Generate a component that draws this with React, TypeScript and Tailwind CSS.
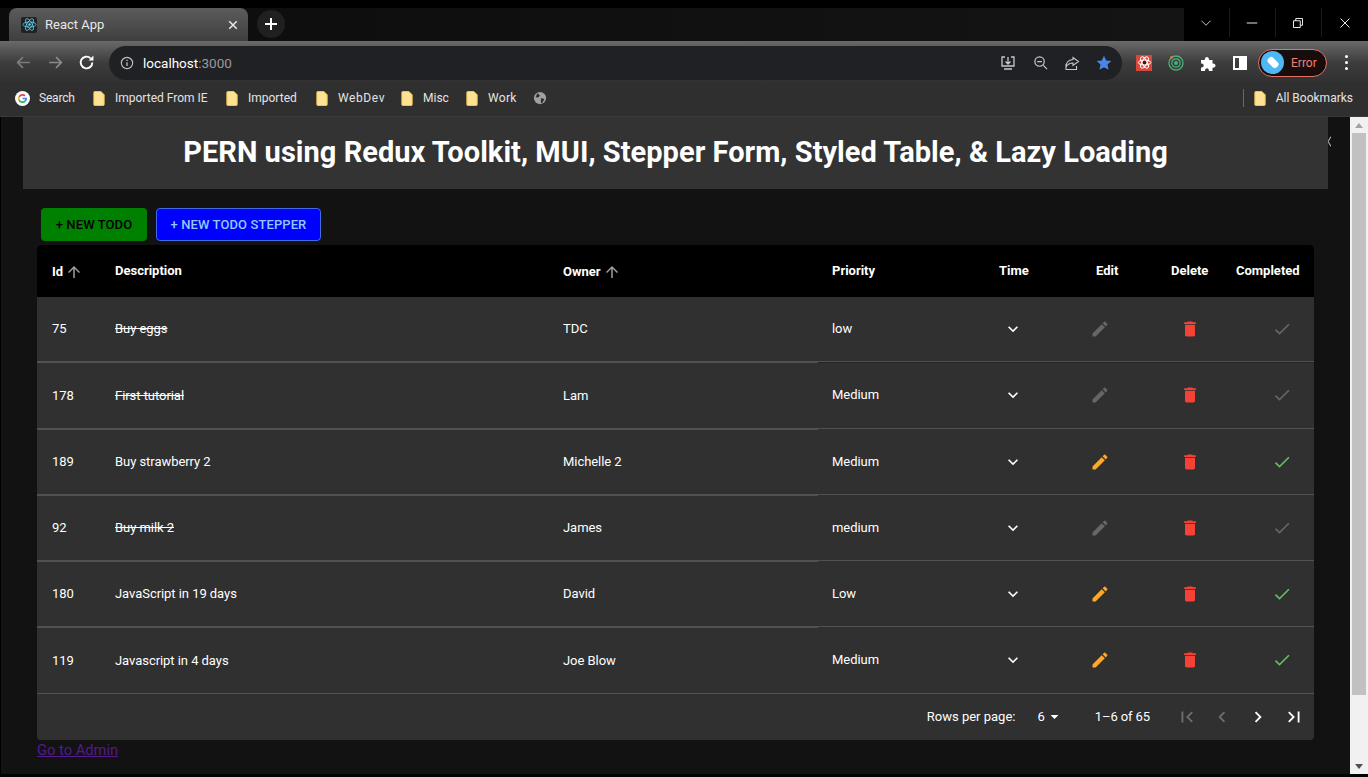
import type { ReactNode } from "react";

const mui = {
  edit: "M3 17.25V21h3.75L17.81 9.94l-3.75-3.75L3 17.25zM20.71 7.04c.39-.39.39-1.02 0-1.41l-2.34-2.34a.9959.9959 0 0 0-1.41 0l-1.83 1.83 3.75 3.75 1.83-1.83z",
  trash: "M6 19c0 1.1.9 2 2 2h8c1.1 0 2-.9 2-2V7H6v12zM19 4h-3.5l-1-1h-5l-1 1H5v2h14V4z",
  check: "M9 16.17 4.83 12l-1.42 1.41L9 19 21 7l-1.41-1.41z",
  down: "M7.41 8.59 12 13.17l4.59-4.58L18 10l-6 6-6-6 1.41-1.41z",
  up: "M4 12l1.41 1.41L11 7.83V20h2V7.83l5.58 5.59L20 12l-8-8-8 8z",
  first: "M18.41 16.59 13.82 12l4.59-4.59L17 6l-6 6 6 6zM6 6h2v12H6z",
  last: "M5.59 7.41 10.18 12l-4.59 4.59L7 18l6-6-6-6zM16 6h2v12h-2z",
  left: "M15.41 16.59 10.83 12l4.58-4.59L14 6l-6 6 6 6 1.41-1.41z",
  right: "M8.59 16.59 13.17 12 8.59 7.41 10 6l6 6-6 6-1.41-1.41z",
  drop: "M7 10l5 5 5-5z",
};

function Mui({ d, className }: { d: string; className: string }) {
  return (
    <svg viewBox="0 0 24 24" fill="currentColor" className={className}>
      <path d={d} />
    </svg>
  );
}

function Stroke({ children, className }: { children: ReactNode; className: string }) {
  return (
    <svg viewBox="0 0 16 16" fill="none" stroke="currentColor" strokeWidth="1.3" className={className}>
      {children}
    </svg>
  );
}

function Folder() {
  return (
    <svg viewBox="0 0 12 16" className="w-[12px] h-[15px] shrink-0">
      <path d="M0.5 1.5a1 1 0 0 1 1-1h6.5l3.5 3.5v10.5a1 1 0 0 1-1 1h-9a1 1 0 0 1-1-1z" fill="#fde293" stroke="#f9c84a" />
    </svg>
  );
}

function ReactLogo() {
  return (
    <div className="w-[16px] h-[16px] rounded-[2px] bg-[#222] flex items-center justify-center">
      <svg viewBox="-12 -11 24 22" className="w-[15px] h-[15px]" fill="none" stroke="#61dafb" strokeWidth="1.2">
        <circle r="2" fill="#61dafb" stroke="none" />
        <ellipse rx="10.5" ry="4.2" />
        <ellipse rx="10.5" ry="4.2" transform="rotate(60)" />
        <ellipse rx="10.5" ry="4.2" transform="rotate(120)" />
      </svg>
    </div>
  );
}

function TabBar() {
  return (
    <div className="h-[41px] pt-[8px] bg-black flex">
      <div className="flex-1 flex items-start bg-gradient-to-r from-[#0c0c0c] to-[#141414] pl-[9px]">
        <div className="w-[239px] h-[33px] rounded-t-[8px] bg-gradient-to-b from-[#5c5c5c] to-[#3f3f3f] flex items-center pl-[12px] pr-[9px]">
          <ReactLogo />
          <span className="ml-[8px] text-[13px] text-[#e8e8e8] flex-1">React App</span>
          <Stroke className="w-[12px] h-[12px] text-[#e8e8e8]">
            <path d="M3 3 13 13M13 3 3 13" strokeWidth="2" />
          </Stroke>
        </div>
        <div className="ml-[9px] mt-[2px] w-[28px] h-[28px] rounded-full bg-[#202020] flex items-center justify-center">
          <Stroke className="w-[16px] h-[16px] text-white">
            <path d="M8 2v12M2 8h12" strokeWidth="2" />
          </Stroke>
        </div>
      </div>
      <div className="w-[184px] h-[29px] bg-black flex text-white">
        {["down", "min", "max", "close"].map((k) => (
          <div key={k} className="w-[46px] pr-[1px] flex items-center justify-center border-r border-[#1c1c1c] last:border-r-0">
            <Stroke className="w-[12px] h-[12px]">
              {k === "down" && <path d="M2 5l6 6 6-6" strokeWidth="1" />}
              {k === "min" && <path d="M1 8h14" strokeWidth="1.2" />}
              {k === "max" && <path d="M2 5h9v9H2zM5 5V2h9v9h-3" strokeWidth="1.2" />}
              {k === "close" && <path d="M2 2l12 12M14 2 2 14" strokeWidth="1.2" />}
            </Stroke>
          </div>
        ))}
      </div>
    </div>
  );
}

function Toolbar() {
  return (
    <div className="h-[43px] bg-gradient-to-b from-[#6a6a6a] via-[#3d3d3d] to-[#2f2f2f] flex items-center pl-[15px]">
      <Stroke className="w-[17px] h-[17px] text-[#7d7d7d]">
        <path d="M14 8H2.5M7.5 3l-5 5 5 5" strokeWidth="1.6" />
      </Stroke>
      <Stroke className="w-[17px] h-[17px] ml-[15px] text-[#8a8a8a]">
        <path d="M2 8h11.5M8.5 3l5 5-5 5" strokeWidth="1.6" />
      </Stroke>
      <Stroke className="w-[17px] h-[17px] ml-[14px] text-white">
        <path d="M13.5 8a5.5 5.5 0 1 1-1.6-3.9" strokeWidth="1.8" />
        <path d="M14.5 1.5v4.5H10z" fill="currentColor" stroke="none" />
      </Stroke>
      <div className="ml-[14px] w-[1013px] h-[34px] rounded-full bg-[#202124] flex items-center pl-[11px] pr-[10px]">
        <Stroke className="w-[14px] h-[14px] text-[#bdbdbd]">
          <circle cx="8" cy="8" r="6.5" />
          <path d="M8 7v4.5M8 4.2v1.6" strokeWidth="1.5" />
        </Stroke>
        <span className="ml-[9px] pt-[1px] text-[13.5px] text-white flex-1">
          localhost<span className="text-[#9a9a9a]">:3000</span>
        </span>
        <Stroke className="w-[16px] h-[16px] -ml-[1px] text-[#c8c8c8]">
          <path d="M5 2H2v9h12V2h-3M8 2v7M5.5 6.5 8 9l2.5-2.5M4 14h8" />
        </Stroke>
        <Stroke className="w-[15px] h-[15px] ml-[17px] text-[#c8c8c8]">
          <circle cx="7" cy="7" r="5" />
          <path d="M4.5 7h5M11 11l4 4" />
        </Stroke>
        <Stroke className="w-[16px] h-[16px] ml-[16px] text-[#c8c8c8]">
          <path d="M9 2.5 14.5 6.5 9 10.5V8C5.5 8 3.5 9.5 2 12c0-4 2.5-7 7-7.5zM2 9v5.5h10.5V11" strokeWidth="1.1" />
        </Stroke>
        <svg viewBox="0 0 16 16" className="w-[16px] h-[16px] ml-[16px]">
          <path d="M8 .8l2.2 4.7 5.1.6-3.8 3.5 1 5.1L8 12.2l-4.5 2.5 1-5.1L.7 6.1l5.1-.6z" fill="#4a86e8" />
        </svg>
      </div>
      <div className="ml-[14px] w-[16px] h-[16px] bg-[#d9473a] flex items-center justify-center">
        <svg viewBox="-12 -11 24 22" className="w-[15px] h-[15px]" fill="none" stroke="#fff" strokeWidth="1.6">
          <circle r="3" fill="#222" stroke="none" />
          <ellipse rx="10" ry="4" />
          <ellipse rx="10" ry="4" transform="rotate(60)" />
          <ellipse rx="10" ry="4" transform="rotate(120)" />
        </svg>
      </div>
      <svg viewBox="0 0 16 16" className="w-[16px] h-[16px] ml-[16px]" fill="none">
        <circle cx="8" cy="8" r="7" stroke="#46b17b" strokeWidth="1.3" />
        <circle cx="8" cy="8" r="4.2" stroke="#46b17b" strokeWidth="1.2" />
        <circle cx="8" cy="8" r="2" fill="#46b17b" />
        <circle cx="3.5" cy="2.5" r="1.4" fill="#e8703a" />
      </svg>
      <svg viewBox="0 0 16 16" className="w-[16px] h-[16px] ml-[17px]" fill="#fff">
        <path d="M0 5h3.8c-.4-4 4.6-4 4.2 0h3.5v3.5c4-.4 4 4.6 0 4.2V16H7.9c.4-3.6-4.2-3.6-3.8 0H0v-3.6c3.6.6 3.6-4.2 0-3.8z" />
      </svg>
      <div className="ml-[16px] w-[14px] h-[14px] border-[2px] border-white flex justify-end">
        <div className="w-[6px] h-full bg-white" />
      </div>
      <div className="ml-[11px] w-[69px] h-[28px] rounded-full border border-[#e57368] bg-[#170d0d] flex items-center pl-[2px]">
        <div className="w-[23px] h-[23px] rounded-full bg-[#4db8f5] flex items-center justify-center">
          <div className="w-[12px] h-[7px] rounded-[3px] bg-white rotate-45" />
        </div>
        <span className="ml-[7px] text-[12px] text-[#ef8074]">Error</span>
      </div>
      <div className="ml-[18px] flex flex-col gap-[3px]">
        <div className="w-[3px] h-[3px] rounded-full bg-white" />
        <div className="w-[3px] h-[3px] rounded-full bg-white" />
        <div className="w-[3px] h-[3px] rounded-full bg-white" />
      </div>
    </div>
  );
}

function Bookmark({ label, className, labelClass }: { label: string; className: string; labelClass?: string }) {
  return (
    <div className={`flex items-center ${className}`}>
      <Folder />
      <span className={`ml-[10px] ${labelClass ?? ""}`}>{label}</span>
    </div>
  );
}

function Bookmarks() {
  return (
    <div className="h-[33px] pb-[4px] bg-[#2f2f2f] border-b border-[#3a3a3a] flex items-center pl-[15px] pr-[15px] text-[12px] text-[#e4e4e4]">
      <svg viewBox="0 0 16 16" className="w-[15px] h-[15px]">
        <circle cx="8" cy="8" r="8" fill="#fff" />
        <path d="M8 3.2a4.8 4.8 0 0 1 3.3 1.3L10 5.8A3 3 0 0 0 5.2 7L3.7 5.8A4.8 4.8 0 0 1 8 3.2z" fill="#ea4335" />
        <path d="M3.7 5.8 5.2 7a3 3 0 0 0 0 2L3.7 10.2a4.8 4.8 0 0 1 0-4.4z" fill="#fbbc05" />
        <path d="M5.2 9A3 3 0 0 0 10 10.3l1.4 1.2A4.8 4.8 0 0 1 3.7 10.2z" fill="#34a853" />
        <path d="M12.8 7.2H8v1.7h2.8a2.4 2.4 0 0 1-.8 1.4l1.4 1.2a4.8 4.8 0 0 0 1.4-4.3z" fill="#4285f4" />
      </svg>
      <span className="ml-[9px] w-[35px] tracking-[-0.2px]">Search</span>
      <Bookmark label="Imported From IE" className="ml-[19px]" labelClass="w-[93px]" />
      <Bookmark label="Imported" className="ml-[18px]" labelClass="w-[50px]" />
      <Bookmark label="WebDev" className="ml-[18px]" labelClass="w-[49px] tracking-[0.6px]" />
      <Bookmark label="Misc" className="ml-[14px]" labelClass="w-[26px]" />
      <Bookmark label="Work" className="ml-[17px]" labelClass="w-[30px] tracking-[0.3px]" />
      <svg viewBox="0 0 16 16" className="w-[14px] h-[14px] ml-[15px]">
        <circle cx="8" cy="8" r="7" fill="#a0a0a0" />
        <path d="M5 2.5 8 5 6 7.5 3 7zM9 8l4 1-2 4-2 1z" fill="#2f2f2f" />
      </svg>
      <div className="ml-auto w-px h-[18px] bg-[#6a6a6a]" />
      <Bookmark label="All Bookmarks" className="ml-[10px]" />
    </div>
  );
}

const rows = [
  { id: "75", desc: "Buy eggs", owner: "TDC", priority: "low", done: true, h: "h-[66px]", thick: true, dark: true, nudge: false },
  { id: "178", desc: "First tutorial", owner: "Lam", priority: "Medium", done: true, h: "h-[67px]", thick: true, dark: false, nudge: true },
  { id: "189", desc: "Buy strawberry 2", owner: "Michelle 2", priority: "Medium", done: false, h: "h-[66px]", thick: true, dark: false, nudge: false },
  { id: "92", desc: "Buy milk 2", owner: "James", priority: "medium", done: true, h: "h-[66px]", thick: true, dark: false, nudge: false },
  { id: "180", desc: "JavaScript in 19 days", owner: "David", priority: "Low", done: false, h: "h-[66px]", thick: true, dark: false, nudge: false },
  { id: "119", desc: "Javascript in 4 days", owner: "Joe Blow", priority: "Medium", done: false, h: "h-[66px]", thick: false, dark: false, nudge: true },
];

const colsLeft = "grid grid-cols-[63px_449px_269px]";
const colsRight = "grid grid-cols-[167px_61px_94px_83px_91px]";

function Row({ row }: { row: (typeof rows)[number] }) {
  return (
    <div className={`flex ${row.h} text-[13px] tracking-[-0.05px] text-white`}>
      <div className={`${colsLeft} items-center border-[#515151] ${row.thick ? "border-b-2" : "border-b"}`}>
        <span className="pl-[15px]">{row.id}</span>
        <span className={`pl-[15px] ${row.done ? "line-through" : ""}`}>{row.desc}</span>
        <span className="pl-[14px]">{row.owner}</span>
      </div>
      <div className={`${colsRight} flex-1 items-center border-b border-[#515151] ${row.thick ? "mb-[1px]" : ""} ${row.dark ? "shadow-[0_1px_0_#242424]" : ""} ${row.nudge ? "pb-[1px]" : ""}`}>
        <span className="pl-[14px]">{row.priority}</span>
        <div className="flex pl-[18px]">
          <Mui d={mui.down} className="w-[20px] h-[20px] text-white" />
        </div>
        <div className="flex pl-[44px]">
          <Mui d={mui.edit} className={`w-[20px] h-[20px] ${row.done ? "text-[#666666]" : "text-[#ffa726]"}`} />
        </div>
        <div className="flex pl-[40px]">
          <Mui d={mui.trash} className="w-[20px] h-[20px] text-[#f44336]" />
        </div>
        <div className="flex pl-[49px]">
          <Mui d={mui.check} className={`w-[20px] h-[20px] ${row.done ? "text-[#666666]" : "text-[#66bb6a]"}`} />
        </div>
      </div>
    </div>
  );
}

export default function App() {
  return (
    <div className="w-[1368px] h-[777px] overflow-hidden bg-black font-['Roboto',sans-serif] flex flex-col">
      <TabBar />
      <Toolbar />
      <Bookmarks />
      <div className="flex-1 flex min-h-0 pl-[1px] pb-[3px]">
        <div className="w-[1349px] bg-[#121212] pl-[22px] flex flex-col">
          <div className="flex">
            <div className="w-[1305px] h-[72px] bg-[#333333] flex items-center justify-center text-[29px] tracking-[0.03px] font-bold text-white">
              PERN using Redux Toolkit, MUI, Stepper Form, Styled Table, &amp; Lazy Loading
            </div>
            <svg viewBox="0 0 4 13" className="w-[3px] h-[13px] mt-[18px]" fill="none" stroke="#a8a8a8" strokeWidth="1.4">
              <path d="M4 0 0 6.5 4 13" />
            </svg>
          </div>
          <div className="pl-[18px] pt-[19px] flex gap-[9px]">
            <button className="w-[106px] h-[33px] rounded-[4px] bg-[#008000] text-[13px] font-medium tracking-[0.1px] text-black">+ NEW TODO</button>
            <button className="w-[165px] h-[33px] rounded-[4px] bg-[#0000ff] border border-[#3f6be0] text-[13px] font-medium tracking-[0.1px] text-[#90caf9]">+ NEW TODO STEPPER</button>
          </div>
          <div className="ml-[14px] mt-[4px] w-[1277px] rounded-[4px] bg-[#303030] overflow-hidden">
            <div className="h-[52px] bg-black flex items-center text-[13px] font-bold text-white">
              <div className={`${colsLeft} items-center`}>
                <span className="pl-[15px] pt-[1px] flex items-center">Id<Mui d={mui.up} className="w-[18px] h-[18px] ml-[2px] text-[#a0a0a0]" /></span>
                <span className="pl-[15px]">Description</span>
                <span className="pl-[14px] pt-[1px] flex items-center">Owner<Mui d={mui.up} className="w-[18px] h-[18px] ml-[2px] text-[#a0a0a0]" /></span>
              </div>
              <div className={`${colsRight} flex-1 items-center`}>
                <span className="pl-[14px]">Priority</span>
                <span className="pl-[14px]">Time</span>
                <span className="pl-[50px]">Edit</span>
                <span className="pl-[31px]">Delete</span>
                <span className="pl-[13px]">Completed</span>
              </div>
            </div>
            {rows.map((r) => (
              <Row key={r.id} row={r} />
            ))}
            <div className="h-[46px] pb-[1px] flex items-center justify-end text-[13px] text-white pr-[9px]">
              <span>Rows per page:</span>
              <span className="ml-[22px]">6</span>
              <Mui d={mui.drop} className="w-[19px] h-[19px]" />
              <span className="ml-[31px] tracking-[-0.1px]">1–6 of 65</span>
              <Mui d={mui.first} className="w-[22px] h-[22px] ml-[26px] text-[#6e6e6e]" />
              <Mui d={mui.left} className="w-[22px] h-[22px] ml-[13px] text-[#6e6e6e]" />
              <Mui d={mui.right} className="w-[22px] h-[22px] ml-[14px]" />
              <Mui d={mui.last} className="w-[22px] h-[22px] ml-[14px]" />
            </div>
          </div>
          <a href="#admin" className="ml-[14px] text-[14.7px] leading-[20px] text-[#551a8b] underline w-fit">Go to Admin</a>
        </div>
        <div className="w-[18px] bg-[#f1f1f1] flex flex-col items-center">
          <div className="h-[16px] flex items-center">
            <div className="border-x-[4px] border-x-transparent border-b-[5px] border-b-[#a3a3a3]" />
          </div>
          <div className="w-[14px] h-[562px] bg-[#c1c1c1]" />
          <div className="mt-auto h-[16px] flex items-center">
            <div className="border-x-[4px] border-x-transparent border-t-[5px] border-t-[#505050]" />
          </div>
        </div>
      </div>
    </div>
  );
}
